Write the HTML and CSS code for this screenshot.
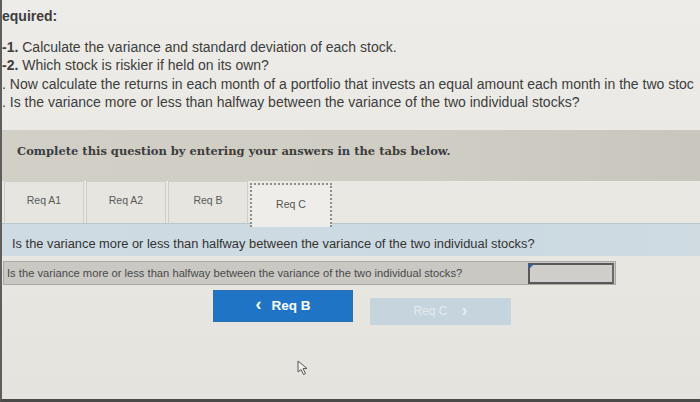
FILE: index.html
```html
<!DOCTYPE html>
<html>
<head>
<meta charset="utf-8">
<link rel="stylesheet" href="styles.css">
</head>
<body>
<div class="screen">
  <div class="required">
    <div class="req-title">equired:</div>
    <div class="req-line"><b>-1.</b> Calculate the variance and standard deviation of each stock.</div>
    <div class="req-line"><b>-2.</b> Which stock is riskier if held on its own?</div>
    <div class="req-line">. Now calculate the returns in each month of a portfolio that invests an equal amount each month in the two stoc</div>
    <div class="req-line">. Is the variance more or less than halfway between the variance of the two individual stocks?</div>
  </div>
  <div class="band">Complete this question by entering your answers in the tabs below.</div>
  <div class="tabs">
    <div class="tab">Req A1</div>
    <div class="tab">Req A2</div>
    <div class="tab">Req B</div>
    <div class="tab active">Req C</div>
  </div>
  <div class="question">Is the variance more or less than halfway between the variance of the two individual stocks?</div>
  <div class="answer-row">
    <div class="answer-label">Is the variance more or less than halfway between the variance of the two individual stocks?</div>
    <div class="answer-input"><span class="flag"></span></div>
  </div>
  <div class="nav">
    <div class="btn prev"><span class="chev">&lsaquo;</span> Req B</div>
    <div class="btn next">Req C <span class="chev">&rsaquo;</span></div>
  </div>
  <svg class="cursor" width="12" height="16" viewBox="0 0 12 16"><path d="M1 1 L1 12 L4 9.5 L6.5 14.5 L8.5 13.5 L6 8.7 L10 8.5 Z" fill="#f2f2ee" stroke="#555" stroke-width="1"/></svg>
</div>
</body>
</html>
```
FILE: styles.css
```css
html, body {
  margin: 0;
  padding: 0;
  background: #e9e8e3;
}
.screen {
  position: relative;
  width: 698px;
  height: 399px;
  border-left: 2px solid #5e5e5c;
  border-bottom: 3px solid #4a4a48;
  background: linear-gradient(180deg, #edece8 0%, #e8e7e2 60%, #e4e3de 100%);
  overflow: hidden;
  font-family: "Liberation Sans", Arial, sans-serif;
  color: #3d3d3d;
}
.required {
  padding-top: 7px;
  white-space: nowrap;
  font-size: 14px;
  line-height: 18.5px;
}
.req-title {
  font-weight: bold;
  margin-bottom: 12px;
}
.band {
  margin-top: 18px;
  height: 51px;
  box-sizing: border-box;
  padding: 14px 0 0 15px;
  background: linear-gradient(90deg, #d1cfc6 0%, #cfcdc4 60%, #c8c6bd 100%);
  font-family: "DejaVu Serif", "Liberation Serif", serif;
  font-weight: bold;
  font-size: 11.5px;
  color: #3d3d3d;
  white-space: nowrap;
}
.tabs {
  display: flex;
  align-items: flex-start;
  gap: 2px;
  padding: 0 0 0 2px;
  height: 42px;
}
.tab {
  width: 80px;
  height: 42px;
  box-sizing: border-box;
  border: 1px solid #cfcec9;
  border-bottom: none;
  background: #e6e5e0;
  display: flex;
  align-items: center;
  justify-content: center;
  font-size: 10.5px;
  color: #5a5a5a;
  padding-bottom: 4px;
}
.tab.active {
  margin-top: 2px;
  height: 44px;
  width: 82px;
  background: #eeede9;
  border: 2px dotted #8d8d8d;
  border-bottom: none;
  padding-bottom: 3px;
  padding-top: 0;
  color: #555;
  position: relative;
  z-index: 1;
}
.question {
  height: 33px;
  box-sizing: border-box;
  padding: 12px 0 0 10px;
  background: linear-gradient(90deg, #cfdbe2 0%, #cbd9e2 70%, #cfdbe1 100%);
  border-top: 1px solid #b9c6cd;
  font-size: 12.85px;
  color: #333;
  white-space: nowrap;
}
.answer-row {
  display: flex;
  align-items: flex-start;
  margin-top: 5px;
  margin-left: 1px;
  width: 613px;
  height: 24px;
  box-sizing: border-box;
  border: 1px solid #a9a8a4;
  background: #c9c8c3;
}
.answer-label {
  width: 521px;
  padding: 5px 0 0 3px;
  font-size: 11.2px;
  color: #4a4a4a;
  white-space: nowrap;
}
.answer-input {
  position: relative;
  margin-top: 1px;
  width: 86px;
  height: 21px;
  box-sizing: border-box;
  border: 2px solid #585858;
  border-right-color: #6a6a6a;
  background: #cfcecb;
}
.flag {
  position: absolute;
  left: -1px;
  top: -1px;
  width: 0;
  height: 0;
  border-top: 5px solid #2f5fa0;
  border-right: 5px solid transparent;
}
.nav {
  display: flex;
  gap: 17px;
  margin-top: 5px;
  margin-left: 211px;
  align-items: flex-start;
}
.btn {
  width: 140px;
  height: 32px;
  display: flex;
  align-items: center;
  justify-content: center;
  font-size: 13.5px;
  font-weight: bold;
  box-sizing: border-box;
}
.btn.prev {
  background: #1f74c6;
  color: #fff;
  border: 1px solid #2a6fb0;
}
.btn.next {
  margin-top: 8px;
  width: 141px;
  height: 27px;
  background: #c6d4dd;
  color: #e4ebf0;
  font-weight: normal;
  font-size: 12px;
}
.chev {
  font-size: 18px;
  line-height: 1;
  margin: 0 10px 3px 0;
  font-weight: bold;
}
.btn.next .chev {
  margin: 0 0 3px 14px;
}
.cursor {
  position: absolute;
  left: 295px;
  top: 360px;
}
```
